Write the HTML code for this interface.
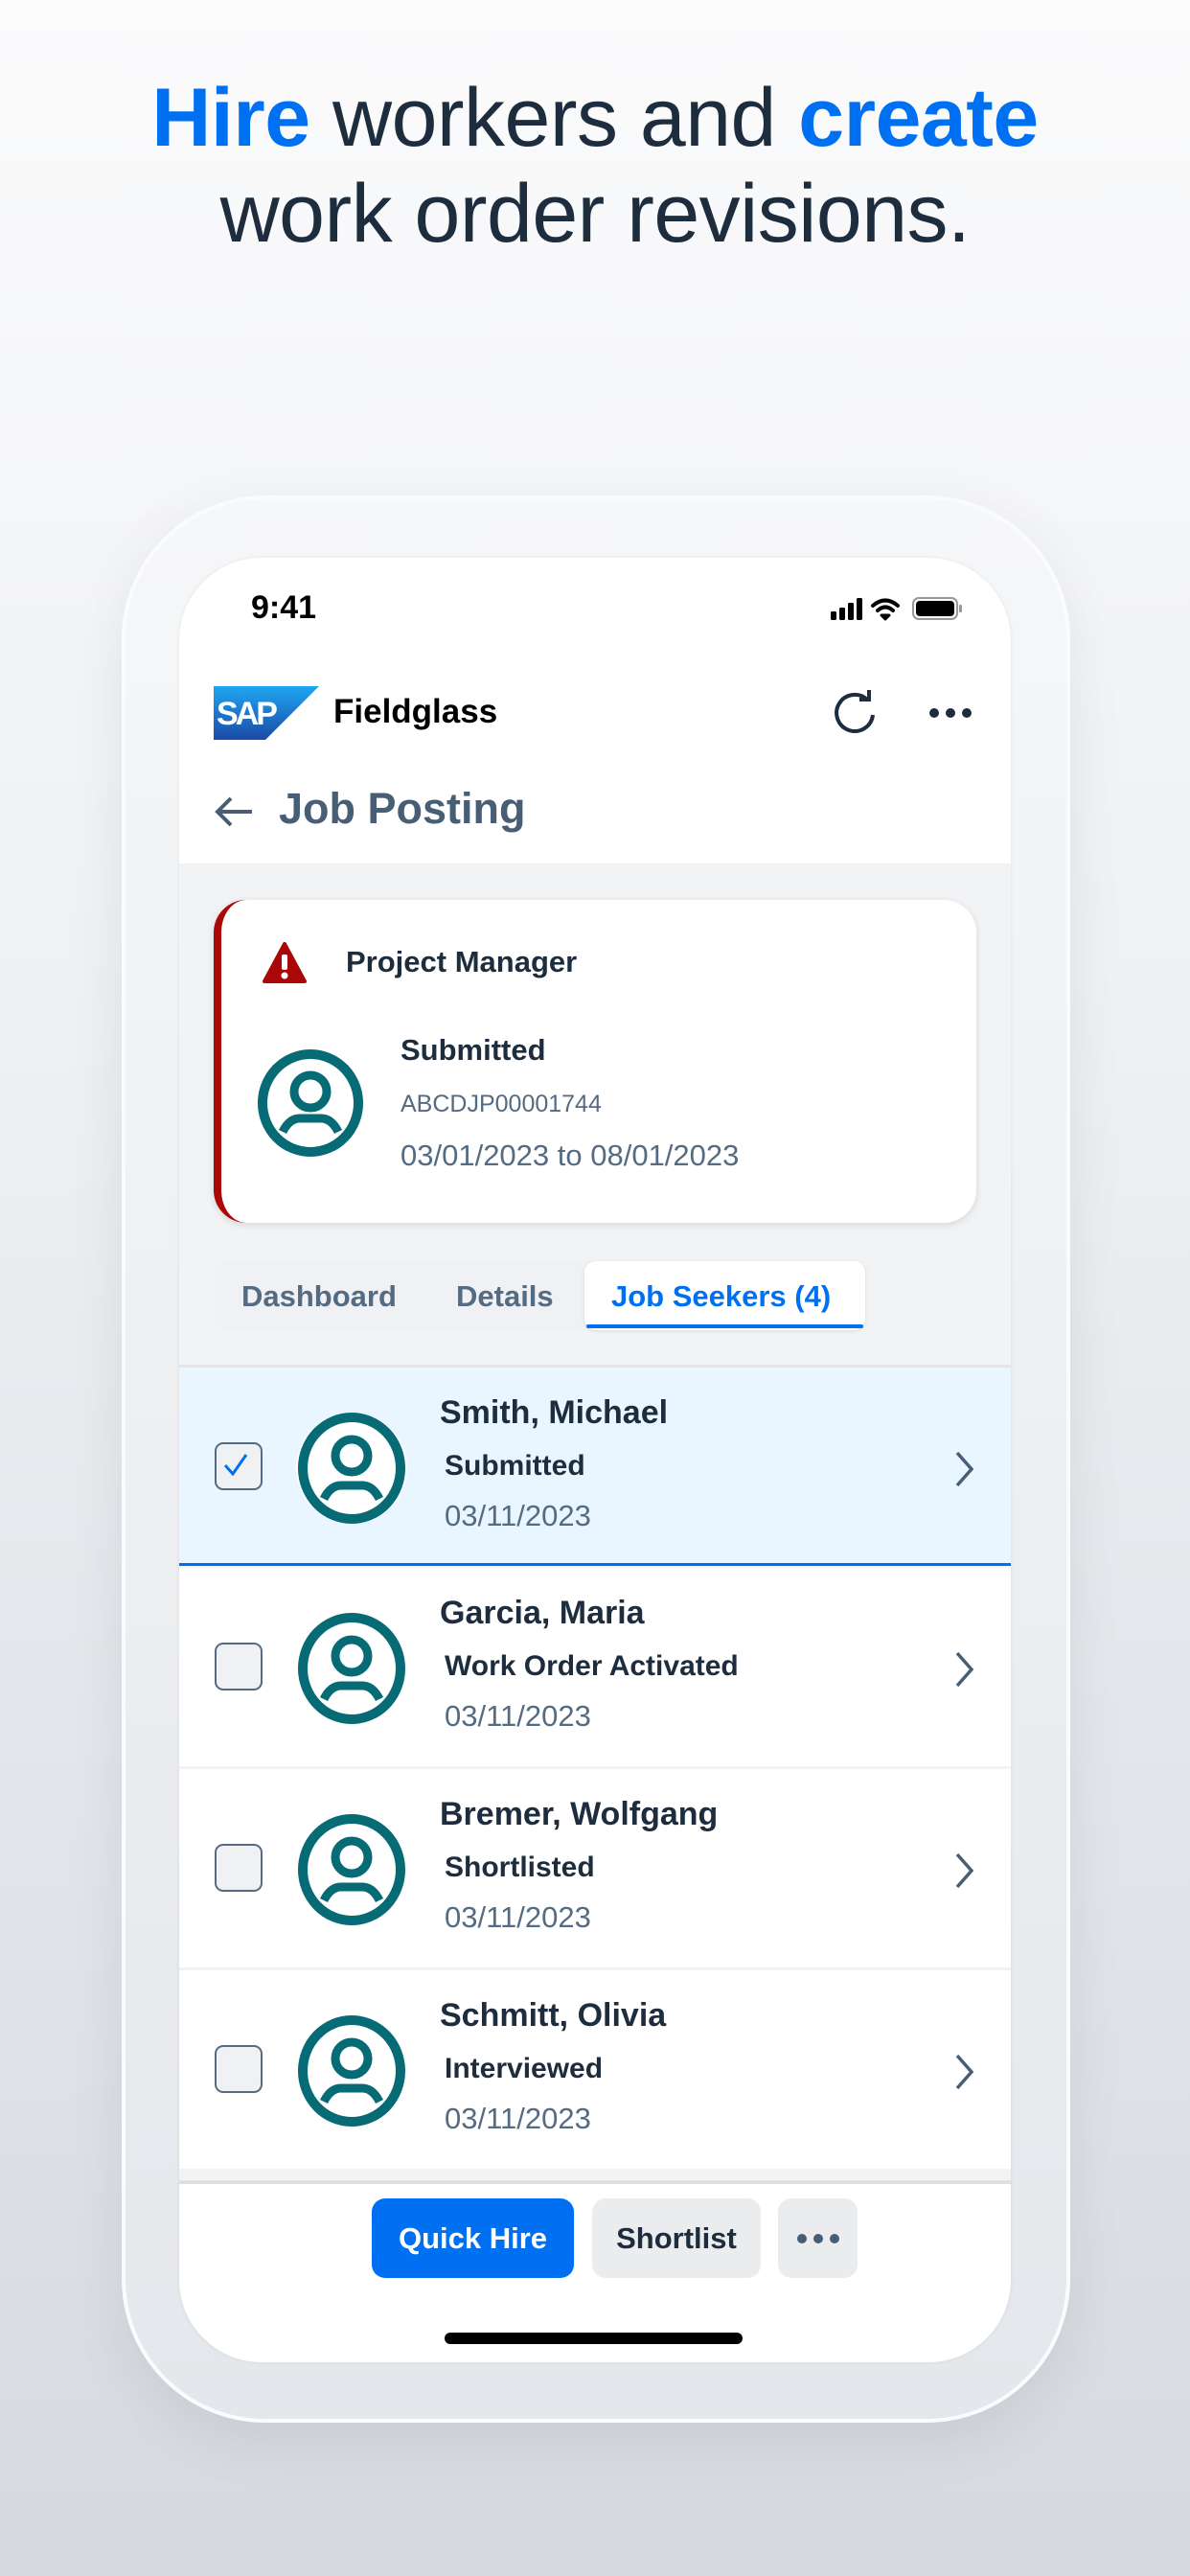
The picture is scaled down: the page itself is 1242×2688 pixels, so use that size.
<!DOCTYPE html>
<html><head><meta charset="utf-8"><style>
*{margin:0;padding:0;box-sizing:border-box}
body{width:1242px;height:2688px;overflow:hidden;font-family:"Liberation Sans",sans-serif;background:linear-gradient(180deg,#fbfbfc 0%,#eef0f3 40%,#d6dae0 100%);position:relative}
.h{position:absolute;left:0;width:1242px;text-align:center;font-size:86px;color:#1d2d3e;line-height:100px;letter-spacing:-0.5px}
.h b{color:#0070f2}
.frame{position:absolute;left:127px;top:517px;width:990px;height:2011px;border-radius:150px;background:linear-gradient(180deg,#f6f7f8,#e4e7eb);border:4px solid #fafbfc;box-shadow:0 20px 60px rgba(0,0,0,.08)}
.screen{position:absolute;left:187px;top:582px;width:868px;height:1883px;border-radius:86px;background:#f2f3f5;overflow:hidden;box-shadow:0 0 4px rgba(0,0,0,.08)}
.abs{position:absolute}
.t{position:absolute;white-space:nowrap}
.row{position:absolute;left:0;width:868px;height:207px;background:#fff}
.cb{position:absolute;left:37px;top:78px;width:50px;height:50px;border:2.5px solid #556b82;border-radius:9px;background:#eff1f3}
.nm{position:absolute;left:272px;top:28px;font-size:34px;font-weight:bold;color:#1d2d3e}
.st{position:absolute;left:277px;top:86px;font-size:30px;font-weight:bold;color:#1d2d3e}
.dt{position:absolute;left:277px;top:137px;font-size:31px;color:#556b82}
.av{position:absolute;left:122px;top:47px}
.chev{position:absolute;left:808px;top:86px}
</style></head><body>
<div class="h" style="top:73px"><b>Hire</b> workers and <b>create</b></div>
<div class="h" style="top:173px">work order revisions.</div>
<div class="frame"></div>
<div class="screen">
 <div class="abs" style="left:0;top:0;width:868px;height:319px;background:#fff"></div>
 <div class="t" style="left:75px;top:33px;font-size:34px;font-weight:bold;color:#000">9:41</div>
 <svg class="abs" style="left:680px;top:40px" width="140" height="26" viewBox="0 0 140 26">
  <rect x="0" y="16" width="6" height="9" rx="1.5" fill="#000"/><rect x="9" y="12" width="6" height="13" rx="1.5" fill="#000"/><rect x="18" y="7" width="6" height="18" rx="1.5" fill="#000"/><rect x="27" y="2" width="6" height="23" rx="1.5" fill="#000"/>
  <path d="M44 10 Q57 -1 70 10" stroke="#000" stroke-width="4" fill="none" stroke-linecap="round"/><path d="M49 15 Q57 8 65 15" stroke="#000" stroke-width="4" fill="none" stroke-linecap="round"/><path d="M53 20 L57 24 L61 20 Z" fill="#000" stroke="#000" stroke-width="3" stroke-linejoin="round"/>
  <rect x="86" y="2" width="46" height="22" rx="6" fill="none" stroke="#999" stroke-width="2"/><rect x="89" y="5" width="40" height="16" rx="4" fill="#000"/><rect x="134" y="9" width="3" height="8" rx="1" fill="#999"/>
 </svg>
 <svg class="abs" style="left:36px;top:134px" width="110" height="56" viewBox="0 0 110 56">
  <defs><linearGradient id="g" x1="0" y1="0" x2="0" y2="1"><stop offset="0" stop-color="#1ea7f2"/><stop offset="1" stop-color="#1b4aa6"/></linearGradient></defs>
  <path d="M0 0 H110 L54 56 H0 Z" fill="url(#g)"/>
  <text x="3" y="40" font-family="Liberation Sans" font-weight="bold" font-size="34" fill="#fff" letter-spacing="-3">SAP</text>
 </svg>
 <div class="t" style="left:161px;top:141px;font-size:35px;font-weight:bold;color:#000">Fieldglass</div>
 <svg class="abs" style="left:680px;top:138px" width="52" height="52" viewBox="0 0 52 52"><path d="M38 10 A19 19 0 1 0 44 26" stroke="#1d2d3e" stroke-width="4" fill="none"/><path d="M30 10 H40 V0" stroke="#1d2d3e" stroke-width="4" fill="none"/></svg>
 <svg class="abs" style="left:782px;top:155px" width="46" height="14"><circle cx="6" cy="7" r="5" fill="#1d2d3e"/><circle cx="23" cy="7" r="5" fill="#1d2d3e"/><circle cx="40" cy="7" r="5" fill="#1d2d3e"/></svg>
 <svg class="abs" style="left:36px;top:248px" width="42" height="34"><path d="M40 17 H4 M18 3 L4 17 L18 31" stroke="#475e75" stroke-width="4" fill="none"/></svg>
 <div class="t" style="left:104px;top:236px;font-size:45px;font-weight:bold;color:#475e75">Job Posting</div>

 <div class="abs" style="left:36px;top:357px;width:796px;height:337px;background:#fff;border-radius:34px;border-left:8px solid #aa0808;box-shadow:0 2px 8px rgba(0,0,0,.12)"></div>
 <svg class="abs" style="left:87px;top:400px" width="46" height="46" viewBox="0 0 46 46"><path d="M23 3 L44 42 H2 Z" fill="#aa0808" stroke="#aa0808" stroke-width="4" stroke-linejoin="round"/><rect x="20" y="14" width="6" height="16" rx="2" fill="#fff"/><circle cx="23" cy="36" r="3.5" fill="#fff"/></svg>
 <div class="t" style="left:174px;top:404px;font-size:31px;font-weight:bold;color:#1d2d3e">Project Manager</div>
 <svg class="abs" style="left:81px;top:513px" width="112" height="112" viewBox="0 0 112 112"><ellipse cx="56" cy="56" rx="50" ry="51" stroke="#076b75" stroke-width="10" fill="none"/><circle cx="56" cy="44" r="17" stroke="#076b75" stroke-width="9" fill="none"/><path d="M27 86 Q34 72 45 72 H67 Q78 72 85 86" stroke="#076b75" stroke-width="9" fill="none"/></svg>
 <div class="t" style="left:231px;top:496px;font-size:31px;font-weight:bold;color:#1d2d3e">Submitted</div>
 <div class="t" style="left:231px;top:556px;font-size:25px;color:#556b82">ABCDJP00001744</div>
 <div class="t" style="left:231px;top:606px;font-size:31px;color:#556b82">03/01/2023 to 08/01/2023</div>

 <div class="abs" style="left:36px;top:734px;width:680px;height:72px;background:#eff1f4;border-radius:12px"></div>
 <div class="t" style="left:65px;top:753px;font-size:31px;font-weight:bold;color:#556b82">Dashboard</div>
 <div class="t" style="left:289px;top:753px;font-size:31px;font-weight:bold;color:#556b82">Details</div>
 <div class="abs" style="left:423px;top:734px;width:293px;height:72px;background:#fff;border-radius:12px;box-shadow:0 1px 4px rgba(0,0,0,.1)"></div>
 <div class="abs" style="left:425px;top:800px;width:289px;height:4px;background:#0070f2;border-radius:2px"></div>
 <div class="t" style="left:451px;top:753px;font-size:31px;font-weight:bold;color:#0070f2">Job Seekers (4)</div>
 <div class="abs" style="left:0;top:842px;width:868px;height:3px;background:#e3e5e8"></div>

 <div class="row" style="top:845px;background:#eaf6ff;border-bottom:3px solid #0070f2">
  <div class="cb"><svg width="45" height="45" style="position:absolute;left:0;top:0"><path d="M9 22 L17 31 L31 11" stroke="#0070f2" stroke-width="3" fill="none"/></svg></div>
  <svg class="av" width="116" height="116" viewBox="0 0 116 116"><circle cx="58" cy="58" r="58" fill="#fff"/><ellipse cx="58" cy="58" rx="51" ry="53" stroke="#076b75" stroke-width="10" fill="none"/><circle cx="58" cy="45" r="17" stroke="#076b75" stroke-width="9" fill="none"/><path d="M29 90 Q36 76 47 76 H69 Q80 76 87 90" stroke="#076b75" stroke-width="9" fill="none"/></svg>
  <div class="nm">Smith, Michael</div><div class="st">Submitted</div><div class="dt">03/11/2023</div>
  <svg class="chev" width="24" height="40"><path d="M4 3 L19 20 L4 37" stroke="#475e75" stroke-width="3.5" fill="none"/></svg>
 </div>

 <div class="row" style="top:1054px">
  <div class="cb"></div>
  <svg class="av" width="116" height="116" viewBox="0 0 116 116"><ellipse cx="58" cy="58" rx="51" ry="53" stroke="#076b75" stroke-width="10" fill="none"/><circle cx="58" cy="45" r="17" stroke="#076b75" stroke-width="9" fill="none"/><path d="M29 90 Q36 76 47 76 H69 Q80 76 87 90" stroke="#076b75" stroke-width="9" fill="none"/></svg>
  <div class="nm">Garcia, Maria</div><div class="st">Work Order Activated</div><div class="dt">03/11/2023</div>
  <svg class="chev" width="24" height="40"><path d="M4 3 L19 20 L4 37" stroke="#475e75" stroke-width="3.5" fill="none"/></svg>
 </div>

 <div class="row" style="top:1264px">
  <div class="cb"></div>
  <svg class="av" width="116" height="116" viewBox="0 0 116 116"><ellipse cx="58" cy="58" rx="51" ry="53" stroke="#076b75" stroke-width="10" fill="none"/><circle cx="58" cy="45" r="17" stroke="#076b75" stroke-width="9" fill="none"/><path d="M29 90 Q36 76 47 76 H69 Q80 76 87 90" stroke="#076b75" stroke-width="9" fill="none"/></svg>
  <div class="nm">Bremer, Wolfgang</div><div class="st">Shortlisted</div><div class="dt">03/11/2023</div>
  <svg class="chev" width="24" height="40"><path d="M4 3 L19 20 L4 37" stroke="#475e75" stroke-width="3.5" fill="none"/></svg>
 </div>

 <div class="row" style="top:1474px">
  <div class="cb"></div>
  <svg class="av" width="116" height="116" viewBox="0 0 116 116"><ellipse cx="58" cy="58" rx="51" ry="53" stroke="#076b75" stroke-width="10" fill="none"/><circle cx="58" cy="45" r="17" stroke="#076b75" stroke-width="9" fill="none"/><path d="M29 90 Q36 76 47 76 H69 Q80 76 87 90" stroke="#076b75" stroke-width="9" fill="none"/></svg>
  <div class="nm">Schmitt, Olivia</div><div class="st">Interviewed</div><div class="dt">03/11/2023</div>
  <svg class="chev" width="24" height="40"><path d="M4 3 L19 20 L4 37" stroke="#475e75" stroke-width="3.5" fill="none"/></svg>
 </div>

 <div class="abs" style="left:0;top:1693px;width:868px;height:3px;background:#e3e5e8"></div>
 <div class="abs" style="left:0;top:1694px;width:868px;height:200px;background:#fff;border-top:3px solid #dcdee1"></div>
 <div class="abs" style="left:201px;top:1712px;width:211px;height:83px;background:#0070f2;border-radius:14px;color:#fff;font-size:31px;font-weight:bold;text-align:center;line-height:83px">Quick Hire</div>
 <div class="abs" style="left:431px;top:1712px;width:176px;height:83px;background:#eaecee;border-radius:14px;color:#1d2d3e;font-size:31px;font-weight:bold;text-align:center;line-height:83px">Shortlist</div>
 <div class="abs" style="left:625px;top:1712px;width:83px;height:83px;background:#eaecee;border-radius:14px"></div>
 <svg class="abs" style="left:644px;top:1748px" width="46" height="12"><circle cx="6" cy="6" r="5" fill="#475e75"/><circle cx="23" cy="6" r="5" fill="#475e75"/><circle cx="40" cy="6" r="5" fill="#475e75"/></svg>
 <div class="abs" style="left:277px;top:1852px;width:311px;height:12px;background:#000;border-radius:6px"></div>
</div>
</body></html>
